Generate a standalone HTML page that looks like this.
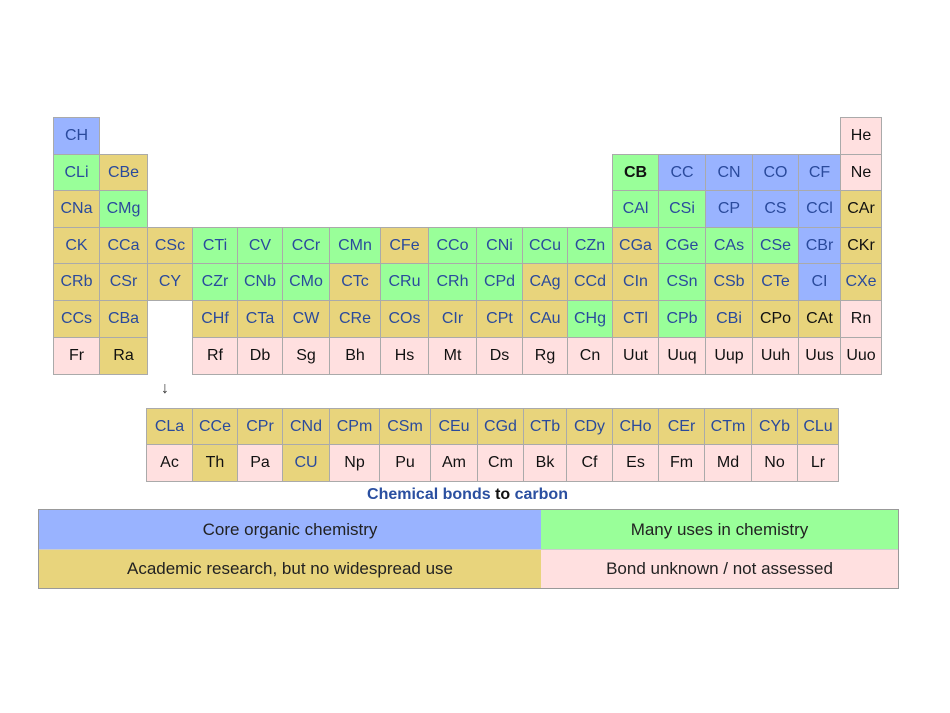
<!DOCTYPE html>
<html><head><meta charset="utf-8"><style>
body{margin:0;width:950px;height:713px;background:#fff;position:relative;font-family:"Liberation Sans",Arial,sans-serif;overflow:hidden}
.c{position:absolute;box-sizing:border-box;border:1px solid #aaa;display:flex;align-items:center;justify-content:center;font-size:16px;color:#2a4a9c}
.b{background:#99b3ff}.g{background:#99ff99}.y{background:#e8d47c}.p{background:#ffe0e0;color:#111}.k{color:#111}
.t{position:absolute;left:0;width:935px;top:486px;text-align:center;font-weight:bold;font-size:16px;color:#2a4fa0}
.l{position:absolute;box-sizing:border-box;display:flex;align-items:center;justify-content:center;font-size:17px;color:#222}
</style></head><body>
<div id="g"></div>
<div style="position:absolute;left:161px;top:380px;font-size:16px;color:#333">↓</div>
<div class="t">Chemical bonds <span style="color:#111">to</span> carbon</div>
<div style="position:absolute;left:38px;top:509px;width:861px;height:80px;border:1px solid #999;box-sizing:border-box"></div>
<div class="l b" style="left:39px;top:510px;width:502px;height:39px">Core organic chemistry</div>
<div class="l g" style="left:541px;top:510px;width:357px;height:39px">Many uses in chemistry</div>
<div class="l y" style="left:39px;top:549px;width:502px;height:39px;border-top:1px solid #ccc">Academic research, but no widespread use</div>
<div class="l p" style="left:541px;top:549px;width:357px;height:39px;border-top:1px solid #ccc">Bond unknown / not assessed</div>
<script>
var X=[53,99,147,192,237,282,329,380,428,476,522,567,612,658,705,752,798,840,881];
var L=[146,192,237,282,329,379,430,477,523,566,612,658,704,751,797,838];
var rows=[
[[0,"CH","b"],[17,"He","p"]],
[[0,"CLi","g"],[1,"CBe","y"],[12,"CB","gkB"],[13,"CC","b"],[14,"CN","b"],[15,"CO","b"],[16,"CF","b"],[17,"Ne","p"]],
[[0,"CNa","y"],[1,"CMg","g"],[12,"CAl","g"],[13,"CSi","g"],[14,"CP","b"],[15,"CS","b"],[16,"CCl","b"],[17,"CAr","yk"]],
"CK y,CCa y,CSc y,CTi g,CV g,CCr g,CMn g,CFe y,CCo g,CNi g,CCu g,CZn g,CGa y,CGe g,CAs g,CSe g,CBr b,CKr yk",
"CRb y,CSr y,CY y,CZr g,CNb g,CMo g,CTc y,CRu g,CRh g,CPd g,CAg y,CCd y,CIn y,CSn g,CSb y,CTe y,CI b,CXe y",
"CCs y,CBa y,_ _,CHf y,CTa y,CW y,CRe y,COs y,CIr y,CPt y,CAu y,CHg g,CTl y,CPb g,CBi y,CPo yk,CAt yk,Rn p",
"Fr p,Ra yk,_ _,Rf p,Db p,Sg p,Bh p,Hs p,Mt p,Ds p,Rg p,Cn p,Uut p,Uuq p,Uup p,Uuh p,Uus p,Uuo p"];
var h="",H=36.6;
function cell(x,y,w,hh,t,c){var cls=c.replace("B","");h+='<div class="c '+cls.split("").join(" ")+'" style="left:'+x+'px;top:'+y+'px;width:'+(w+1)+'px;height:'+(hh+1)+'px;'+(c.indexOf("B")>=0?'font-weight:bold;':'')+'">'+t+'</div>';}
rows.forEach(function(r,ri){
 if(typeof r=="string")r=r.split(",").map(function(s,i){var p=s.split(" ");return [i,p[0],p[1]];});
 r.forEach(function(e){if(e[1]=="_")return;var i=e[0];cell(X[i],Math.round(117+H*ri),X[i+1]-X[i],Math.round(H),e[1],e[2]);});
});
var la="CLa,CCe,CPr,CNd,CPm,CSm,CEu,CGd,CTb,CDy,CHo,CEr,CTm,CYb,CLu".split(",");
var ac="Ac p,Th yk,Pa p,CU y,Np p,Pu p,Am p,Cm p,Bk p,Cf p,Es p,Fm p,Md p,No p,Lr p".split(",");
la.forEach(function(t,i){cell(L[i],408,L[i+1]-L[i],36,t,"y");});
ac.forEach(function(s,i){var p=s.split(" ");cell(L[i],444,L[i+1]-L[i],37,p[0],p[1]);});
document.getElementById("g").innerHTML=h;
</script>
</body></html>
